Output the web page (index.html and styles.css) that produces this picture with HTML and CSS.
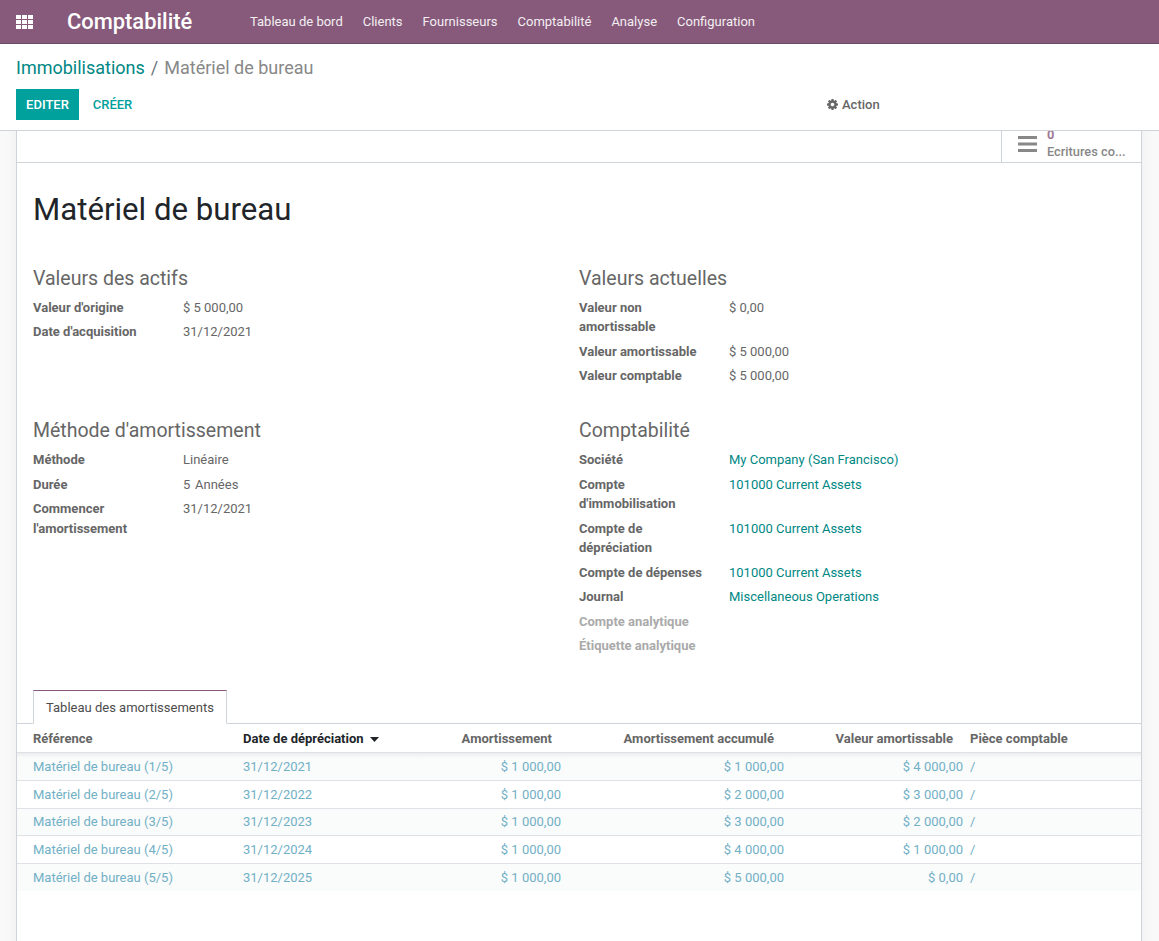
FILE: index.html
```html
<!DOCTYPE html>
<html lang="fr">
<head>
<meta charset="utf-8">
<title>Matériel de bureau</title>
<link rel="stylesheet" href="styles.css">
</head>
<body>
<header class="navbar">
  <svg class="apps" viewBox="0 0 17 14" width="17" height="14"><path d="M0 0h5v4H0zM6 0h5v4H6zM12 0h5v4h-5zM0 5h5v4H0zM6 5h5v4H6zM12 5h5v4h-5zM0 10h5v4H0zM6 10h5v4H6zM12 10h5v4h-5z"/></svg>
  <span class="brand">Comptabilité</span>
  <nav class="menu">
    <a>Tableau de bord</a><a>Clients</a><a>Fournisseurs</a><a>Comptabilité</a><a>Analyse</a><a>Configuration</a>
  </nav>
</header>
<section class="panel">
  <div class="crumbs"><a class="crumb-link">Immobilisations</a><span class="crumb-sep">/</span><span class="crumb-cur">Matériel de bureau</span></div>
  <div class="actions">
    <button class="btn-edit">EDITER</button>
    <button class="btn-create">CRÉER</button>
    <div class="action">
      <svg class="gear" viewBox="0 0 1536 1536" width="11" height="11"><path d="M1024 768q0-106-75-181t-181-75-181 75-75 181 75 181 181 75 181-75 75-181zm512-109v222q0 12-8 23t-20 13l-185 28q-19 54-39 91 35 50 107 138 10 12 10 25t-9 23q-27 37-99 108t-94 71q-12 0-26-9l-138-108q-44 23-91 38-16 136-29 186-7 28-36 28H657q-14 0-24.500-8.500T621 1506l-28-184q-49-16-90-37l-141 107q-10 9-25 9-14 0-25-11-126-114-165-168-7-10-7-23 0-12 8-23 15-21 51-66.500t54-70.500q-27-50-41-99L29 913q-13-2-21-12.500T0 877V655q0-12 8-23t19-13l186-28q14-46 39-92-40-57-107-138-10-12-10-24 0-10 9-23 26-36 98.500-107.500T337 135q13 0 26 10l138 107q44-23 91-38 16-136 29-186 7-28 36-28h222q14 0 24.500 8.500T915 30l28 184q49 16 90 37l142-107q9-9 24-9 13 0 25 10 129 119 165 170 7 8 7 22 0 12-8 23-15 21-51 66.500t-54 70.500q26 50 41 98l183 28q13 2 21 12.500t8 23.500z"/></svg>
      <span>Action</span>
    </div>
  </div>
</section>
<main class="scroller">
  <article class="sheet">
    <div class="statbar">
      <div class="stat">
        <svg class="bars" viewBox="0 0 19 16" width="19" height="16"><path d="M0 0h19v3H0zM0 6.500h19v3H0zM0 13h19v3H0z"/></svg>
        <div class="stat-text"><span class="stat-num">0</span><span class="stat-label">Ecritures co...</span></div>
      </div>
    </div>
    <h1 class="title">Matériel de bureau</h1>
    <div class="groups">
      <section class="group">
        <h2>Valeurs des actifs</h2>
        <div class="field"><label>Valeur d'origine</label><span>$ 5 000,00</span></div>
        <div class="field"><label>Date d'acquisition</label><span>31/12/2021</span></div>
      </section>
      <section class="group">
        <h2>Valeurs actuelles</h2>
        <div class="field"><label>Valeur non amortissable</label><span>$ 0,00</span></div>
        <div class="field"><label>Valeur amortissable</label><span>$ 5 000,00</span></div>
        <div class="field"><label>Valeur comptable</label><span>$ 5 000,00</span></div>
      </section>
      <section class="group">
        <h2>Méthode d'amortissement</h2>
        <div class="field"><label>Méthode</label><span>Linéaire</span></div>
        <div class="field"><label>Durée</label><span class="duration">5 Années</span></div>
        <div class="field"><label>Commencer l'amortissement</label><span>31/12/2021</span></div>
      </section>
      <section class="group">
        <h2>Comptabilité</h2>
        <div class="field"><label>Société</label><a>My Company (San Francisco)</a></div>
        <div class="field"><label>Compte d'immobilisation</label><a>101000 Current Assets</a></div>
        <div class="field"><label>Compte de dépréciation</label><a>101000 Current Assets</a></div>
        <div class="field"><label>Compte de dépenses</label><a>101000 Current Assets</a></div>
        <div class="field"><label>Journal</label><a>Miscellaneous Operations</a></div>
        <div class="field"><label class="muted">Compte analytique</label></div>
        <div class="field"><label class="muted">Étiquette analytique</label></div>
      </section>
    </div>
    <div class="tabs"><span class="tab">Tableau des amortissements</span></div>
    <table class="lines">
      <colgroup><col class="c1"><col class="c2"><col class="c3"><col class="c4"><col class="c5"><col></colgroup>
      <thead>
        <tr>
          <th class="first">Référence</th>
          <th class="sorted">Date de dépréciation <svg class="caret" viewBox="0 0 9 5" width="9" height="5"><path d="M0 0h9L4.500 5z"/></svg></th>
          <th class="num">Amortissement</th>
          <th class="num wide">Amortissement accumulé</th>
          <th class="num wide">Valeur amortissable</th>
          <th class="last">Pièce comptable</th>
        </tr>
      </thead>
      <tbody>
        <tr><td class="first">Matériel de bureau (1/5)</td><td>31/12/2021</td><td class="num">$ 1 000,00</td><td class="num">$ 1 000,00</td><td class="num">$ 4 000,00</td><td class="last">/</td></tr>
        <tr><td class="first">Matériel de bureau (2/5)</td><td>31/12/2022</td><td class="num">$ 1 000,00</td><td class="num">$ 2 000,00</td><td class="num">$ 3 000,00</td><td class="last">/</td></tr>
        <tr><td class="first">Matériel de bureau (3/5)</td><td>31/12/2023</td><td class="num">$ 1 000,00</td><td class="num">$ 3 000,00</td><td class="num">$ 2 000,00</td><td class="last">/</td></tr>
        <tr><td class="first">Matériel de bureau (4/5)</td><td>31/12/2024</td><td class="num">$ 1 000,00</td><td class="num">$ 4 000,00</td><td class="num">$ 1 000,00</td><td class="last">/</td></tr>
        <tr><td class="first">Matériel de bureau (5/5)</td><td>31/12/2025</td><td class="num">$ 1 000,00</td><td class="num">$ 5 000,00</td><td class="num">$ 0,00</td><td class="last">/</td></tr>
      </tbody>
    </table>
  </article>
</main>
</body>
</html>
```
FILE: styles.css
```css
* { box-sizing: border-box; }
html, body { height: 100%; }
body {
  margin: 0;
  display: flex;
  flex-direction: column;
  overflow: hidden;
  font-family: Roboto, "Liberation Sans", sans-serif;
  font-size: 13px;
  line-height: 19.5px;
  color: #666;
  background: #fff;
}
.navbar {
  flex: none;
  height: 44px;
  display: flex;
  align-items: center;
  background: #875a7b;
  border-bottom: 1px solid #6b4a63;
  color: #fff;
  padding-left: 16px;
}
.apps { fill: #fff; flex: none; }
.brand { margin-left: 34px; font-size: 21.900px; font-weight: 500; width: 183px; }
.menu { display: flex; gap: 20px; color: #f3eef2; }
.panel {
  flex: none;
  height: 87px;
  padding: 12px 16px 0;
  background: #fff;
  border-bottom: 1px solid #ced4da;
}
.crumbs { display: flex; align-items: center; font-size: 18px; line-height: 24px; }
.crumb-link { color: #008784; }
.crumb-sep { color: #6c757d; margin: 0 6px; }
.crumb-cur { color: #888; }
.actions { display: flex; align-items: center; margin-top: 9px; height: 31px; }
.actions button {
  border: 0;
  font: 500 13px/18px Roboto, sans-serif;
  height: 31px;
  padding: 0;
}
.btn-edit { width: 63px; background: #00a09d; color: #fff; }
.btn-create { background: transparent; color: #00a09d; width: 67px; }
.action { margin-left: 681px; display: flex; align-items: center; gap: 4px; font-weight: 500; color: #666; }
.gear { fill: #666; }
.scroller { flex: 1; min-height: 0; overflow: hidden; background: #f9f9f9; padding: 0 17px; }
.sheet {
  margin-top: -13px;
  min-height: 900px;
  background: #fff;
  box-shadow: 0 0 0 1px #ced4da, 0 5px 14px rgba(0,0,0,.06);
  margin-right: 1px;
  width: 1124px;
}
.statbar { height: 45px; border-bottom: 1px solid #ced4da; display: flex; justify-content: flex-end; }
.stat {
  width: 140px;
  height: 44px;
  border-left: 1px solid #ced4da;
  display: flex;
  align-items: flex-start;
  padding-left: 16px;
  overflow: hidden;
}
.bars { fill: #888; margin-top: 18px; flex: none; }
.stat-text { display: flex; flex-direction: column; margin-left: 10px; line-height: 16px; margin-top: 9px; font-size: 12.800px; font-weight: 500; color: #888; white-space: nowrap; }
.stat-num { color: #a07a95; font-weight: 700; }
.stat-label { margin-top: 1px; }
.title { margin: 24px 16px 0; font-size: 31.200px; line-height: 46px; font-weight: 400; color: #212529; }
.groups {
  display: grid;
  grid-template-columns: 546px 1fr;
  padding: 0 16px;
  margin-top: 32.600px;
  row-gap: 27.500px;
}
.group h2 { margin: 0 0 6px; font-size: 19.500px; line-height: 26px; font-weight: 400; color: #666; }
.field { display: flex; margin-bottom: 5px; }
.field label { width: 150px; flex: none; font-weight: 700; color: #666; padding-right: 16px; }
.field label.muted { color: #aaa; }
.field a { color: #008784; }
.duration { word-spacing: 1.500px; }
.tabs { margin-top: 29px; height: 34px; border-bottom: 1px solid #ced4da; padding-left: 16px; }
.tab {
  display: block;
  width: 194px;
  height: 34px;
  padding: 7px 12px 0;
  border: 1px solid #ced4da;
  border-top-color: #875a7b;
  border-bottom: 1px solid #fff;
  background: #fff;
  color: #4c4c4c;
}
.lines { width: 100%; table-layout: fixed; border-collapse: collapse; }
.c1 { width: 222px; }
.c2 { width: 181px; }
.c3 { width: 145px; }
.c4 { width: 223px; }
.c5 { width: 179px; }
.lines th {
  height: 29.300px;
  padding: 1px 4px 0;
  text-align: left;
  font-weight: 700;
  color: #666;
  white-space: nowrap;
  border-bottom: 1px solid #dee2e6;
}
.lines th.sorted { color: #212529; }
.lines th.num { text-align: right; padding-right: 13px; }
.lines th.wide { padding-right: 14px; }
.lines th.first, .lines td.first { padding-left: 16px; }
.lines th.last, .lines td.last { padding-left: 3px; }
.caret { fill: #212529; margin-left: 3px; vertical-align: 1px; }
.lines td {
  height: 27.700px;
  padding: 0 4px;
  color: #71b0c6;
  white-space: nowrap;
  border-top: 1px solid #dee2e6;
}
.lines tbody tr:first-child td { border-top: 0; box-shadow: inset 0 5px 4px -3px rgba(0,0,0,.07); }
.lines tbody tr:nth-child(odd) { background: #fafbfb; }
.lines td.num { text-align: right; }
```
